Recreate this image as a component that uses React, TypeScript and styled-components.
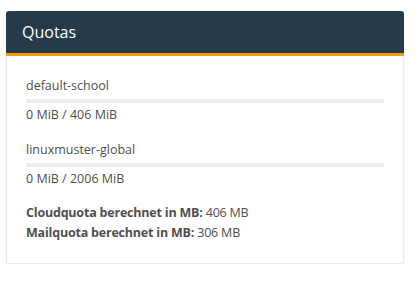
import React from "react";
import styled, { createGlobalStyle } from "styled-components";

const Global = createGlobalStyle`
  html, body { margin: 0; padding: 0; background: #fff; }
  body { font-family: "Open Sans", "Noto Sans", sans-serif; }
`;

const Page = styled.div`
  padding: 11px 14px 0 6px;
`;

const Card = styled.section`
  width: 398px;
  box-sizing: border-box;
  border: 1px solid #e8e8e8;
  border-top: none;
  border-radius: 3px;
  box-shadow: 0 1px 2px rgba(0, 0, 0, 0.08);
  background: #fff;
`;

const Header = styled.header`
  height: 42px;
  margin: 0 -1px;
  background: #253a4a;
  border-bottom: 3px solid #f39c12;
  border-radius: 3px 3px 0 0;
  display: flex;
  align-items: center;
  padding: 0 16px;
  color: #fff;
  font-size: 16px;
`;

const Body = styled.div`
  padding: 20px 19px 20px 19px;
  color: #4f4f4f;
  font-size: 12.5px;
  font-weight: 500;
`;

const Quota = styled.div<{ $last?: boolean }>`
  margin-bottom: ${(p) => (p.$last ? 0 : 15)}px;
`;

const Line = styled.div`
  line-height: 20px;
  white-space: nowrap;
`;

const Bar = styled.div`
  height: 4px;
  background: #ededed;
  margin: 3px 0 2px;
`;

const Fill = styled.div`
  height: 100%;
  background: #f39c12;
`;

const Summary = styled.div`
  margin-top: 14px;
  letter-spacing: -0.2px;
`;

const Strong = styled.b`
  font-weight: 700;
`;

const quotas = [
  { name: "default-school", used: 0, total: 406 },
  { name: "linuxmuster-global", used: 0, total: 2006 },
];

export default function App() {
  return (
    <>
      <Global />
      <Page>
        <Card>
          <Header>Quotas</Header>
          <Body>
            {quotas.map((q, i) => (
              <Quota key={q.name} $last={i === quotas.length - 1}>
                <Line>{q.name}</Line>
                <Bar>
                  <Fill style={{ width: `${(q.used / q.total) * 100}%` }} />
                </Bar>
                <Line>
                  {q.used} MiB / {q.total} MiB
                </Line>
              </Quota>
            ))}
            <Summary>
              <Line>
                <Strong>Cloudquota berechnet in MB:</Strong> 406 MB
              </Line>
              <Line>
                <Strong>Mailquota berechnet in MB:</Strong> 306 MB
              </Line>
            </Summary>
          </Body>
        </Card>
      </Page>
    </>
  );
}
